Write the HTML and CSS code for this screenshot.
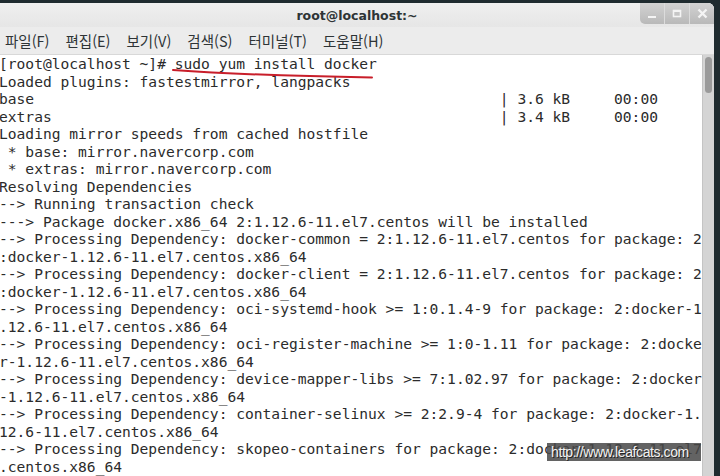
FILE: index.html
```html
<!DOCTYPE html>
<html lang="ko">
<head>
    <meta charset="UTF-8">
    <title>root@localhost:~</title>
    <link rel="stylesheet" href="styles.css">
</head>
<body>
    <div class="window">
        <div class="titlebar">
            <div></div>
            <div class="title">root@localhost:~</div>
            <div class="controls">
                <div class="ctl">
                    <svg width="10" height="10" viewBox="0 0 10 10"><rect x="1" y="7" width="8" height="2" fill="#f4f4f4"/></svg>
                </div>
                <div class="ctl">
                    <svg width="10" height="10" viewBox="0 0 10 10"><rect x="1.5" y="1.5" width="7" height="6" fill="none" stroke="#f4f4f4" stroke-width="1.6"/><rect x="1" y="1" width="8" height="2" fill="#f4f4f4"/></svg>
                </div>
                <div class="ctl">
                    <svg width="11" height="11" viewBox="0 0 11 11"><path d="M1.5 1.5 L9.5 9.5 M9.5 1.5 L1.5 9.5" stroke="#f4f4f4" stroke-width="2.4"/></svg>
                </div>
            </div>
        </div>

        <div class="menubar">
            <span class="menu-item">파일(F)</span>
            <span class="menu-item">편집(E)</span>
            <span class="menu-item">보기(V)</span>
            <span class="menu-item">검색(S)</span>
            <span class="menu-item">터미널(T)</span>
            <span class="menu-item">도움말(H)</span>
        </div>

        <div class="content">
            <div class="terminal">
<pre class="output">[root@localhost ~]# sudo yum install docker
Loaded plugins: fastestmirror, langpacks
base                                                     | 3.6 kB     00:00
extras                                                   | 3.4 kB     00:00
Loading mirror speeds from cached hostfile
 * base: mirror.navercorp.com
 * extras: mirror.navercorp.com
Resolving Dependencies
--> Running transaction check
---> Package docker.x86_64 2:1.12.6-11.el7.centos will be installed
--> Processing Dependency: docker-common = 2:1.12.6-11.el7.centos for package: 2
:docker-1.12.6-11.el7.centos.x86_64
--> Processing Dependency: docker-client = 2:1.12.6-11.el7.centos for package: 2
:docker-1.12.6-11.el7.centos.x86_64
--> Processing Dependency: oci-systemd-hook >= 1:0.1.4-9 for package: 2:docker-1
.12.6-11.el7.centos.x86_64
--> Processing Dependency: oci-register-machine >= 1:0-1.11 for package: 2:docke
r-1.12.6-11.el7.centos.x86_64
--> Processing Dependency: device-mapper-libs >= 7:1.02.97 for package: 2:docker
-1.12.6-11.el7.centos.x86_64
--> Processing Dependency: container-selinux >= 2:2.9-4 for package: 2:docker-1.
12.6-11.el7.centos.x86_64
--> Processing Dependency: skopeo-containers for package: 2:docker-1.12.6-11.el7
.centos.x86_64</pre>
                <!-- red pen mark under the command -->
                <svg class="mark" width="400" height="30" viewBox="0 0 400 30">
                    <path d="M173 15 Q 250 20.5 372 22.5" fill="none" stroke="#c81e2a" stroke-width="2" stroke-linecap="round"/>
                </svg>
                <div class="watermark">http://www.leafcats.com</div>
            </div>
            <div class="scrollbar">
                <div class="thumb"></div>
            </div>
        </div>
    </div>
</body>
</html>
```

FILE: styles.css
```css
body {
    margin: 0;
    width: 720px;
    height: 476px;
    overflow: hidden;
    background-color: #1f2b2f;
}

.window {
    margin-top: 3px;
    margin-right: 6px;
    height: 473px;
    display: flex;
    flex-direction: column;
    background-color: #ebebeb;
    border-top-right-radius: 6px;
    overflow: hidden;
}

.titlebar {
    height: 24px;
    display: grid;
    grid-template-columns: 1fr auto 1fr;
    align-items: start;
    background: linear-gradient(#efefef, #e6e6e6);
}

.title {
    font-family: "DejaVu Sans", sans-serif;
    font-weight: bold;
    font-size: 12.5px;
    color: #2e3436;
    line-height: 25px;
}

.controls {
    justify-self: end;
    display: flex;
    height: 21px;
    background: linear-gradient(#d2d2d2, #b9b9b9);
    border-bottom-left-radius: 5px;
}

.ctl {
    width: 24px;
    display: flex;
    align-items: center;
    justify-content: center;
    border-left: 1px solid #dcdcdc;
}

.ctl:first-child {
    border-left: none;
}

.menubar {
    height: 27px;
    display: flex;
    align-items: center;
    gap: 16px;
    padding-left: 5px;
    border-bottom: 1px solid #d8d8d8;
    background-color: #ececec;
}

.menu-item {
    font-family: "Noto Sans CJK KR", sans-serif;
    font-size: 14.5px;
    color: #2e3436;
}

.content {
    flex: 1;
    display: flex;
    min-height: 0;
}

.terminal {
    position: relative;
    flex: 1;
    background-color: #ffffff;
    overflow: hidden;
}

.output {
    margin: 0 0 0 -1px;
    font-family: "DejaVu Sans Mono", monospace;
    font-size: 14.6px;
    line-height: 17.5px;
    color: #2b2b2b;
}

.mark {
    position: absolute;
    left: 0;
    top: 0;
}

.watermark {
    position: absolute;
    left: 547px;
    top: 388px;
    width: 154px;
    height: 18px;
    background-color: rgba(72, 72, 72, 0.85);
    color: #f2f2f2;
    font-family: "Liberation Sans", Arial, sans-serif;
    font-size: 14px;
    letter-spacing: -0.4px;
    line-height: 18px;
    padding-left: 4px;
    box-sizing: border-box;
    text-shadow: 1px 1px 0 #222;
}

.scrollbar {
    width: 12px;
    background-color: #d4d4d4;
    border-left: 1px solid #c4c4c4;
    padding: 2px 2px 0 2px;
    box-sizing: border-box;
}

.thumb {
    height: 36px;
    border-radius: 4px;
    background-color: #9a9a9a;
}
```
